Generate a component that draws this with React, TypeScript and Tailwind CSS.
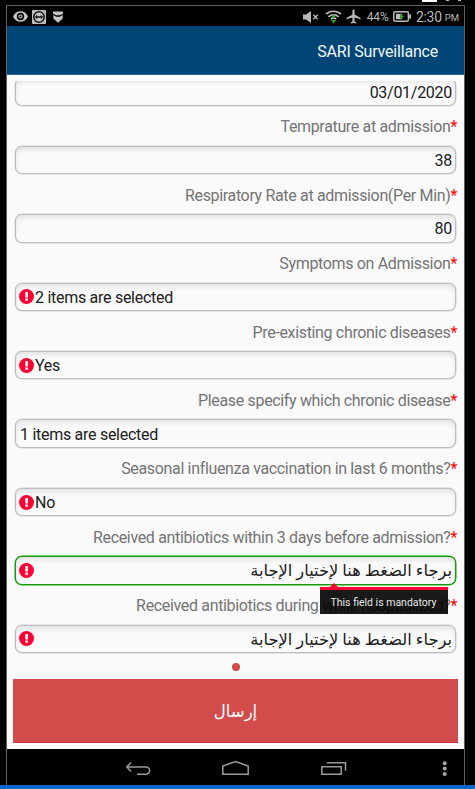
import { MdAirplanemodeActive } from "react-icons/md";

type Question = {
  id: number;
  label: string;
  value: string;
  align: "left" | "right";
  invalid?: boolean;
  focused?: boolean;
  tooltip?: string;
};

const questions: Question[] = [
  { id: 1, label: "Temprature at admission", value: "38", align: "right" },
  { id: 2, label: "Respiratory Rate at admission(Per Min)", value: "80", align: "right" },
  { id: 3, label: "Symptoms on Admission", value: "2 items are selected", align: "left", invalid: true },
  { id: 4, label: "Pre-existing chronic diseases", value: "Yes", align: "left", invalid: true },
  { id: 5, label: "Please specify which chronic disease", value: "1 items are selected", align: "left" },
  { id: 6, label: "Seasonal influenza vaccination in last 6 months?", value: "No", align: "left", invalid: true },
  {
    id: 7,
    label: "Received antibiotics within 3 days before admission?",
    value: "برجاء الضغط هنا لإختيار الإجابة",
    align: "right",
    invalid: true,
    focused: true,
    tooltip: "This field is mandatory",
  },
  {
    id: 8,
    label: "Received antibiotics during while hospitalized?",
    value: "برجاء الضغط هنا لإختيار الإجابة",
    align: "right",
    invalid: true,
  },
];

function ErrorIcon() {
  return (
    <svg className="w-[15px] h-[15px] shrink-0" viewBox="0 0 15 15">
      <circle cx="7.5" cy="7.5" r="7.5" fill="#ff0033" />
      <path d="M6.3 3h2.6v5.4H6.3zM6.3 9.6h2.6v2.2H6.3z" fill="#fff" />
    </svg>
  );
}

function StatusBar() {
  return (
    <div className="h-5 shrink-0 bg-black flex items-center justify-between text-[#b9b9b9]">
      <div className="flex items-center pl-1.5 pt-px">
        <svg className="w-[15px] h-[11px]" viewBox="0 0 15 11">
          <path d="M0 5.5C1.6 2 4.3.3 7.5.3S13.4 2 15 5.5c-1.6 3.5-4.3 5.2-7.5 5.2S1.6 9 0 5.5z" fill="#c4c4c4" />
          <circle cx="7.5" cy="5.5" r="2.9" fill="#c4c4c4" stroke="#000" strokeWidth="1.6" />
          <circle cx="7.5" cy="5.5" r="1" fill="#000" />
        </svg>
        <svg className="w-[14px] h-[14px] ml-1" viewBox="0 0 14 14">
          <rect width="14" height="14" rx="1" fill="#bdbdbd" />
          <circle cx="7" cy="7" r="5.2" fill="#c8c8c8" stroke="#111" strokeWidth="1.5" />
          <path d="M2.8 7l2.4-2.2v1.5h3.6V4.8L11.2 7 8.8 9.2V7.7H5.200v1.5z" fill="#111" />
        </svg>
        <svg className="w-[10px] h-3 ml-[7px]" viewBox="0 0 10 12">
          <path d="M0 .5h10v2.2L7 4.2H3L0 2.7z" fill="#c4c4c4" />
          <path d="M.3 4l3 1.8h3.4l3-1.8v3.6L5 11.8.3 7.6z" fill="#c4c4c4" />
        </svg>
      </div>
      <div className="flex items-center pr-[5px] pt-px">
        <svg className="w-4 h-3" viewBox="0 0 16 12">
          <path d="M0 3.5h3L8 0v12L3 8.5H0z" fill="#b9b9b9" />
          <path d="M10.3 3.8l4.4 4.4m0-4.4l-4.4 4.4" stroke="#b9b9b9" strokeWidth="1.4" />
        </svg>
        <svg className="w-[17px] h-[15px] ml-[6px]" viewBox="0 0 17 15">
          <path
            d="M1 5.2a11 11 0 0 1 15 0M3.4 7.8a7.5 7.5 0 0 1 10.2 0M5.8 10.2a4 4 0 0 1 5.4 0"
            fill="none"
            stroke="#b9b9b9"
            strokeWidth="1.6"
          />
          <path d="M8.5 5.5l2.5 3.2H6zM8.5 14.5L6 11h5z" fill="#22a51c" />
        </svg>
        <MdAirplanemodeActive className="w-[17px] h-[17px] ml-[3px]" />
        <span className="ml-[5px] text-[12px]">44%</span>
        <svg className="w-[18px] h-[11px] ml-1" viewBox="0 0 18 11">
          <rect x=".8" y=".8" width="14.6" height="9.4" rx="1.5" fill="none" stroke="#b9b9b9" strokeWidth="1.5" />
          <path d="M3 2.8h6v5.4H3zM16 3.5h2v4h-2z" fill="#b9b9b9" />
          <path d="M7 2.5l4 3-4 3z" fill="#22a51c" />
        </svg>
        <span className="ml-[5px] text-[14px] leading-none tracking-[-0.3px]">2:30</span>
        <span className="ml-[3px] mt-[3px] text-[9.5px] leading-none">PM</span>
      </div>
    </div>
  );
}

function Tooltip({ text }: { text: string }) {
  return (
    <div className="absolute z-10 right-[7px] top-[30px] w-[128px] h-[27px] border-t-[3px] border-[#ff0033] bg-black/90 flex items-center justify-center">
      <svg className="absolute left-[10px] -top-[7px] w-2 h-1" viewBox="0 0 8 4">
        <path d="M4 0l4 4H0z" fill="#ff0033" />
      </svg>
      <span className="pt-px text-[10.5px] text-[#e8e8e8] whitespace-nowrap">{text}</span>
    </div>
  );
}

function Field({ question }: { question: Question }) {
  const { value, align, invalid, focused, tooltip } = question;
  const arabic = /[\u0600-\u06ff]/.test(value);
  return (
    <div
      className={`relative h-[28.4px] flex items-center rounded-[7px] border bg-[#fafafa] pl-[3px] pr-[2.5px] text-[#202020] ${
        focused
          ? "border-[#159a0b] shadow-[inset_0_3px_5px_rgba(0,0,0,0.09),0_0_0_0.5px_#159a0b]"
          : "border-[#bebebe] shadow-[inset_0_3px_5px_rgba(0,0,0,0.09),0_0_0_0.5px_#d0d0d0]"
      }`}
    >
      {invalid && <ErrorIcon />}
      <span
        dir="auto"
        className={`pt-[2px] ${arabic ? "text-[16.3px]" : "text-[16px] tracking-[-0.28px]"} ${
          align === "right" ? "ml-auto" : "pl-px"
        }`}
      >
        {value}
      </span>
      {tooltip && <Tooltip text={tooltip} />}
    </div>
  );
}

function NavBar() {
  return (
    <nav className="h-9 shrink-0 bg-black flex items-center">
      <svg className="w-full h-9" viewBox="0 0 457 36" fill="none" stroke="#9b9b9b" strokeWidth="1.5">
        <path d="M124 13.5l-4.2 4.5 4.2 4.5M119.8 18H139a3.6 3.6 0 0 1 0 7.2h-9" />
        <path d="M215.8 25.2V17l12.7-4.5 12.7 4.5v8.2z" />
        <path d="M314.8 17.8h19.4v7.4h-19.4zM320 13.8h18.5v8" />
        <g fill="#a8a8a8" stroke="none">
          <circle cx="437.7" cy="14.2" r="2" />
          <circle cx="437.7" cy="19.5" r="2" />
          <circle cx="437.7" cy="25" r="2" />
        </g>
      </svg>
    </nav>
  );
}

export default function App() {
  return (
    <div className="w-[475px] h-[789px] overflow-hidden bg-black flex flex-col font-[Roboto,'Noto_Sans','DejaVu_Sans',sans-serif]">
      <div className="h-[5px] shrink-0 flex items-start pl-[422px]">
        <div className="w-[15px] h-[2px] bg-white" />
        <div className="w-[3px] h-px ml-[9px] bg-[#bbb]" />
        <div className="w-[3px] h-px ml-[9px] bg-[#bbb]" />
      </div>

      <div className="ml-[6px] w-[459px] h-[780px] shrink-0 border border-b-0 border-[#626262] flex flex-col">
        <StatusBar />
        <header className="h-[49px] shrink-0 bg-[#004576] border-b border-[#2c6796] flex items-center justify-end pr-[26px]">
          <h1 className="text-[16px] tracking-[-0.2px] text-[#f2f6f9] pt-[3px]">SARI Surveillance</h1>
        </header>

        <main className="h-[674px] shrink-0 bg-[#fafafa] flex flex-col px-[6px] pt-[6px]">
          <div className="h-[578px] shrink-0 overflow-hidden px-[2px]">
            <div className="-mt-[3.5px] mr-[0.5px]">
              <Field question={{ id: 0, label: "", value: "03/01/2020", align: "right" }} />
              {questions.map((question) => (
                <div key={question.id}>
                  <div className="h-10 pt-[3px] flex items-center justify-end text-[16px] tracking-[-0.34px] text-[#747474] -mr-[1.5px] whitespace-nowrap">
                    {question.label}
                    <span className="text-[#ff0000]">*</span>
                  </div>
                  <Field question={question} />
                </div>
              ))}
            </div>
          </div>
          <div className="w-2 h-2 mt-1 ml-[218.5px] rounded-full bg-[#d24c4c] shrink-0" />
          <button
            className="h-16 mt-2 pt-[3px] w-[445px] shrink-0 bg-[#d24c4c] border-b border-[#c43b3b] text-white text-[16.5px]"
            dir="rtl"
          >
            إرسال
          </button>
        </main>

        <NavBar />
      </div>
      <div className="h-1 shrink-0 bg-[#0868cf]" />
    </div>
  );
}
